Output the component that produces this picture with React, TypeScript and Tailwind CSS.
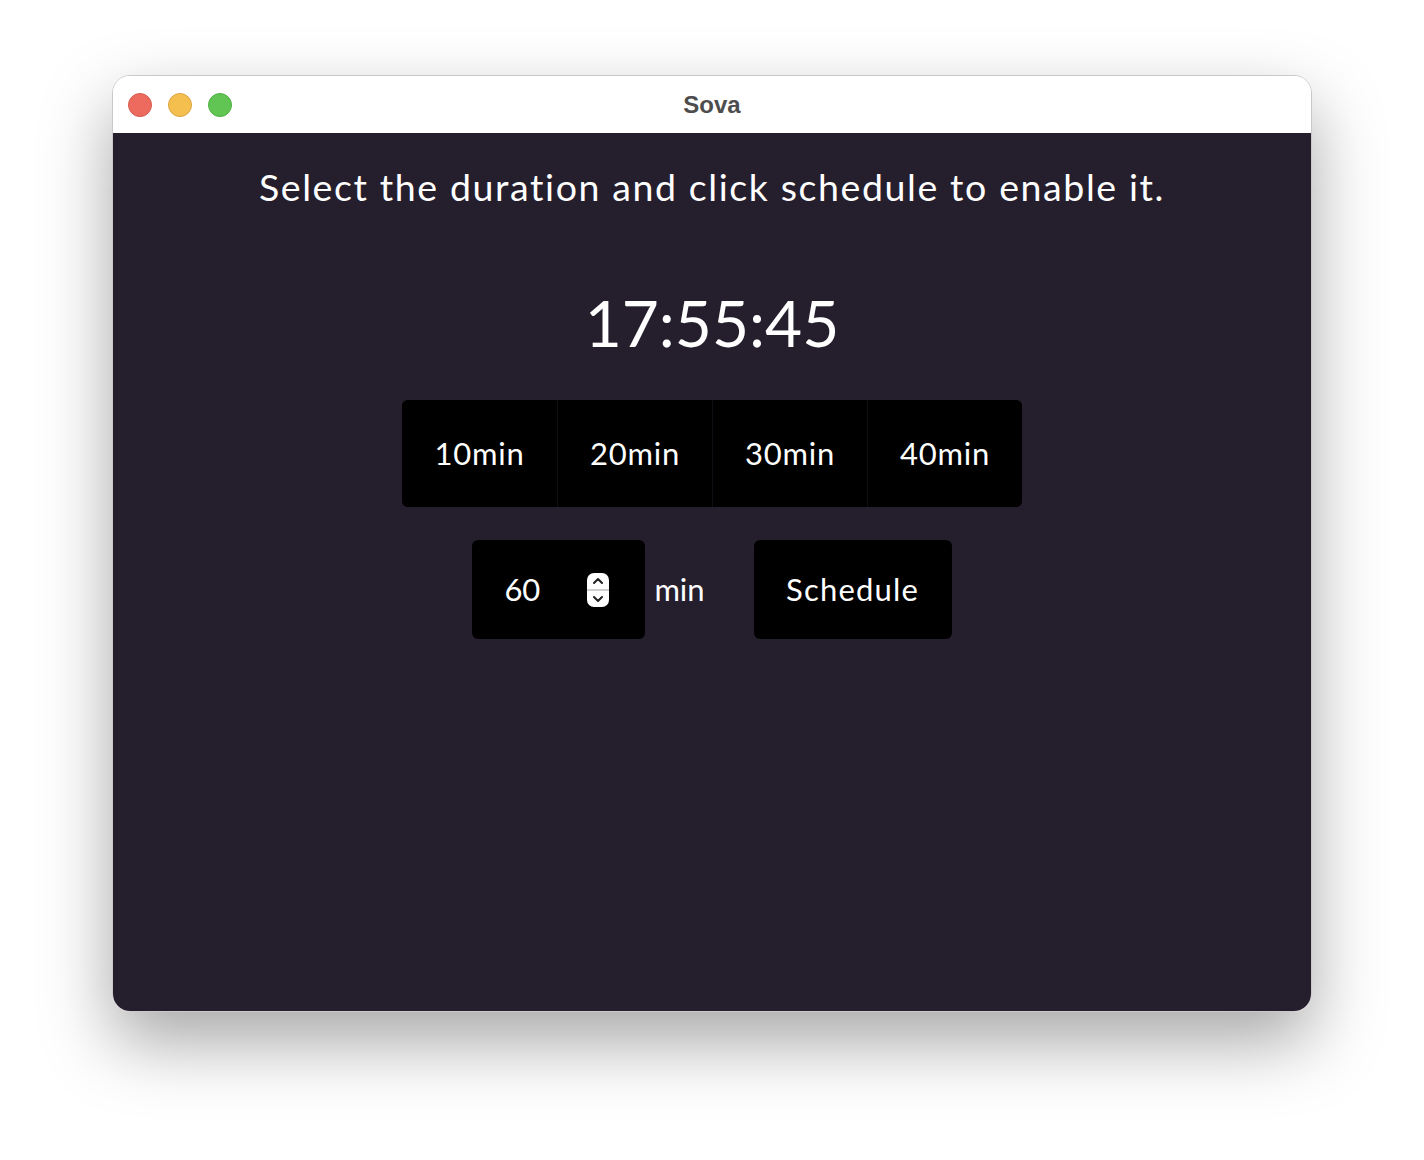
import { useState } from "react";

const font = { fontFamily: "Lato, 'Open Sans', sans-serif" };

export default function App() {
  const [minutes, setMinutes] = useState(60);
  const presets = [10, 20, 30, 40];

  return (
    <div className="w-[1424px] h-[1160px] bg-white pt-[75px] pl-[112px]" style={font}>
      <div className="w-[1200px] h-[937px] rounded-[18px] overflow-hidden flex flex-col border border-[#c9c9c9] shadow-[0_30px_70px_rgba(0,0,0,0.35)]">
        {/* Title bar */}
        <div className="h-[57px] bg-white flex items-center relative shrink-0">
          <div className="flex items-center gap-[16px] pl-[15px]">
            <span className="w-[24px] h-[24px] rounded-full bg-[#ed6a5e] border border-[#d55a4f]" />
            <span className="w-[24px] h-[24px] rounded-full bg-[#f5bf4f] border border-[#d9a53f]" />
            <span className="w-[24px] h-[24px] rounded-full bg-[#61c554] border border-[#4fae44]" />
          </div>
          <div className="absolute inset-0 flex items-center justify-center text-[24px] font-bold text-[#4d4d4d]" style={{ fontFamily: "'Liberation Sans', Arial, sans-serif" }}>
            Sova
          </div>
        </div>

        {/* Body */}
        <div className="flex-1 bg-[#251e2d] text-white flex flex-col items-center">
          <p className="mt-[26px] text-[37.5px] leading-[56px] tracking-[1.6px]">
            Select the duration and click schedule to enable it.
          </p>

          <div className="mt-[70px] text-[64px] leading-[76px]">17:55:45</div>

          <div className="mt-[39px] flex rounded-[6px] overflow-hidden bg-black">
            {presets.map((p, i) => (
              <button
                key={p}
                className={`w-[155px] h-[107px] bg-black text-[31px] tracking-[0.8px] text-white ${i > 0 ? "border-l border-[#0f0c13]" : ""}`}
              >
                {p}min
              </button>
            ))}
          </div>

          <div className="mt-[33px] flex items-center">
            <div className="w-[173px] h-[99px] bg-black rounded-[6px] flex items-center pl-[32px] pr-[36px] justify-between">
              <span className="text-[31px]">{minutes}</span>
              <div className="w-[22px] h-[34px] bg-white rounded-[7px] flex flex-col items-center justify-between py-[3px]">
                <svg width="14" height="10" viewBox="0 0 14 10" onClick={() => setMinutes(minutes + 1)}>
                  <path d="M3 7 L7 3 L11 7" stroke="#222" strokeWidth="2" fill="none" strokeLinecap="round" strokeLinejoin="round" />
                </svg>
                <div className="w-full h-[2px] bg-[#cfcfcf]" />
                <svg width="14" height="10" viewBox="0 0 14 10" onClick={() => setMinutes(minutes - 1)}>
                  <path d="M3 3 L7 7 L11 3" stroke="#222" strokeWidth="2" fill="none" strokeLinecap="round" strokeLinejoin="round" />
                </svg>
              </div>
            </div>
            <span className="ml-[9px] text-[31px]">min</span>
            <button className="ml-[49px] w-[198px] h-[99px] bg-black rounded-[6px] text-[31px] tracking-[1.2px] text-white">
              Schedule
            </button>
          </div>
        </div>
      </div>
    </div>
  );
}
